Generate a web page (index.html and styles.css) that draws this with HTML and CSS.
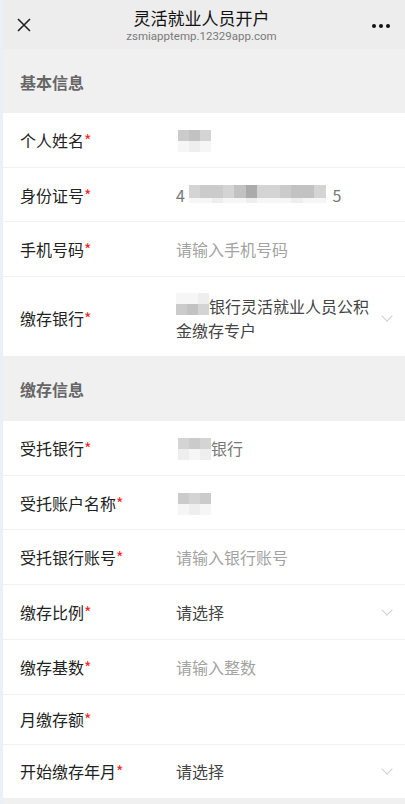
FILE: index.html
```html
<!doctype html>
<html lang="zh-CN">
  <head>
    <meta charset="UTF-8" />
    <meta name="viewport" content="width=device-width, initial-scale=1.0" />
    <title>灵活就业人员开户</title>
    <link rel="stylesheet" href="styles.css">
  </head>
  <body>
    <div class="page">
      <div class="topbar">
        <span class="topbar-close">
          <svg width="16" height="16" viewBox="0 0 16 16"><path d="M2 2 L14 14 M14 2 L2 14" stroke="#222" stroke-width="1.6" fill="none"/></svg>
        </span>
        <div class="topbar-title">
          <div class="title">灵活就业人员开户</div>
          <div class="url">zsmiapptemp.12329app.com</div>
        </div>
        <span class="topbar-more">
          <svg width="20" height="6" viewBox="0 0 20 6"><circle cx="3" cy="3" r="2"/><circle cx="10" cy="3" r="2"/><circle cx="17" cy="3" r="2"/></svg>
        </span>
      </div>

      <div class="section">基本信息</div>
      <div class="group">
        <div class="row">
          <div class="label">个人姓名<i>*</i></div>
          <div class="value">
            <span class="mosaic mosaic-3">
              <b class="c2"></b><b class="c3"></b><b class="c1"></b>
              <b class="c6"></b><b class="c5"></b><b class="c6"></b>
            </span>
          </div>
        </div>
        <div class="row">
          <div class="label">身份证号<i>*</i></div>
          <div class="value muted">4<span class="mosaic mosaic-12">
              <b class="c1"></b><b class="c2"></b><b class="c2"></b><b class="c1"></b><b class="c3"></b><b class="c4"></b><b class="c1"></b><b class="c1"></b><b class="c2"></b><b class="c3"></b><b class="c3"></b><b class="c1"></b>
              <b class="c6"></b><b class="c6"></b><b class="c5"></b><b class="c6"></b><b class="c6"></b><b class="c5"></b><b class="c6"></b><b class="c6"></b><b class="c6"></b><b class="c5"></b><b class="c6"></b><b class="c6"></b>
            </span>5</div>
        </div>
        <div class="row">
          <div class="label">手机号码<i>*</i></div>
          <div class="value placeholder">请输入手机号码</div>
        </div>
        <div class="row row-tall">
          <div class="label">缴存银行<i>*</i></div>
          <div class="value dark"><span class="mosaic mosaic-3 mosaic-low">
              <b class="c6"></b><b class="c6"></b><b class="c5"></b>
              <b class="c2"></b><b class="c3"></b><b class="c1"></b>
            </span>银行灵活就业人员公积金缴存专户</div>
          <span class="chevron"></span>
        </div>
      </div>

      <div class="section section-wide">缴存信息</div>
      <div class="group">
        <div class="row">
          <div class="label">受托银行<i>*</i></div>
          <div class="value muted"><span class="mosaic mosaic-3">
              <b class="c1"></b><b class="c2"></b><b class="c1"></b>
              <b class="c5"></b><b class="c6"></b><b class="c5"></b>
            </span>银行</div>
        </div>
        <div class="row">
          <div class="label">受托账户名称<i>*</i></div>
          <div class="value">
            <span class="mosaic mosaic-3">
              <b class="c2"></b><b class="c1"></b><b class="c2"></b>
              <b class="c6"></b><b class="c5"></b><b class="c6"></b>
            </span>
          </div>
        </div>
        <div class="row">
          <div class="label">受托银行账号<i>*</i></div>
          <div class="value placeholder">请输入银行账号</div>
        </div>
        <div class="row">
          <div class="label">缴存比例<i>*</i></div>
          <div class="value dark">请选择</div>
          <span class="chevron"></span>
        </div>
        <div class="row">
          <div class="label">缴存基数<i>*</i></div>
          <div class="value placeholder">请输入整数</div>
        </div>
        <div class="row row-short">
          <div class="label">月缴存额<i>*</i></div>
          <div class="value"></div>
        </div>
        <div class="row">
          <div class="label">开始缴存年月<i>*</i></div>
          <div class="value dark">请选择</div>
          <span class="chevron"></span>
        </div>
      </div>
    </div>
  </body>
</html>
```

FILE: styles.css
```css
body {
  margin: 0;
  background-color: #eaf0f8;
  font-family: "Noto Sans CJK SC", "Noto Sans", sans-serif;
  color: #222;
}
.page {
  margin-left: 3px;
  min-height: 804px;
  background: #f0f0f0;
}
.topbar {
  height: 49px;
  box-sizing: border-box;
  background: #ededed;
  display: flex;
  align-items: center;
  padding: 0 14px 0 13px;
}
.topbar-close {
  width: 16px;
  height: 16px;
  display: flex;
}
.topbar-title {
  flex: 1;
  text-align: center;
  padding-top: 2px;
}
.title {
  font-size: 17px;
  line-height: 22px;
  color: #111;
}
.url {
  font-family: Roboto, "Noto Sans", sans-serif;
  font-size: 11.5px;
  line-height: 15px;
  color: #7a7a7a;
}
.topbar-more {
  display: flex;
  padding-top: 2px;
}
.topbar-more svg {
  fill: #111;
}
.section {
  height: 64px;
  padding-left: 17px;
  box-sizing: border-box;
  padding-top: 21px;
  font-size: 16px;
  line-height: 24px;
  font-weight: bold;
  color: #666;
}
.section-wide {
  height: 65px;
}
.group {
  background: #fff;
}
.row {
  display: flex;
  align-items: center;
  min-height: 54.7px;
  box-sizing: border-box;
  padding: 0 12px 0 17px;
  border-bottom: 1px solid #f1f1f1;
  font-size: 16px;
}
.row-tall {
  min-height: 79px;
  padding-top: 16px;
  padding-bottom: 14px;
  border-bottom: none;
}
.row-short {
  min-height: 50px;
}
.label {
  width: 156px;
  flex-shrink: 0;
  line-height: 24px;
  color: #222;
}
.label i {
  font-style: normal;
  color: #f2271c;
}
.value {
  flex: 1;
  line-height: 24px;
  min-height: 24px;
  color: #333;
  margin-right: 12px;
}
.placeholder {
  color: #a3a3a3;
}
.muted {
  color: #777;
}
.dark {
  color: #444;
}
.chevron {
  width: 7px;
  height: 7px;
  border-right: 1.2px solid #d0d0d0;
  border-bottom: 1.2px solid #d0d0d0;
  transform: rotate(45deg);
  margin: 0 2px 4px 0;
}
.mosaic {
  display: inline-grid;
  grid-auto-rows: 11px;
  vertical-align: top;
  transform: translateY(2px);
}
.mosaic-3 {
  grid-template-columns: repeat(3, 11px);
  margin-left: 2px;
}
.mosaic-12 {
  grid-template-columns: repeat(12, 11.4px);
  grid-template-rows: 13px 5px;
  margin-left: 4px;
  margin-right: 7px;
}
.mosaic-low {
  margin-left: 0;
  transform: translateY(-1px);
}
.mosaic b {
  display: block;
}
.c1 { background: #d4d4d4; }
.c2 { background: #cbcbcb; }
.c3 { background: #c2c2c2; }
.c4 { background: #ababab; }
.c5 { background: #eeeeee; }
.c6 { background: #f6f6f6; }
```
